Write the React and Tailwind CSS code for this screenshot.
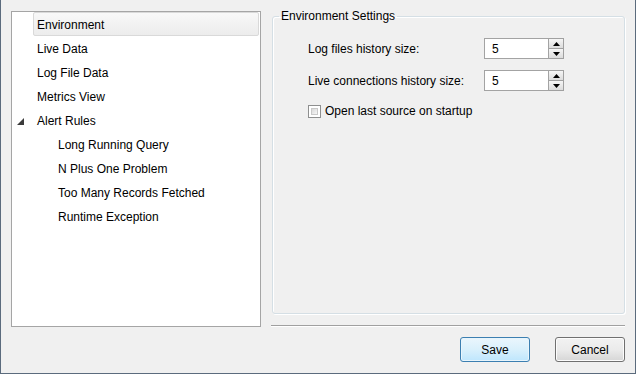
const font = { fontFamily: '"Liberation Sans", Arial, sans-serif' };

const topItems = ['Live Data', 'Log File Data', 'Metrics View'];
const alertRules = ['Long Running Query', 'N Plus One Problem', 'Too Many Records Fetched', 'Runtime Exception'];

const SpinBox = ({ value }) => (
    <div className="flex h-[21px] w-[80px]">
        <div className="flex h-full w-[65px] items-center border border-[#a3a3a3] bg-white pl-[7px] pt-[1px] text-[12px] text-black">{value}</div>
        <div className="flex h-full w-[15px] flex-col">
            <button className="flex h-[11px] w-full items-center justify-center border border-l-0 border-[#a0a0a0] bg-gradient-to-b from-[#f6f6f6] to-[#dcdcdc]">
                <svg width="7" height="4" viewBox="0 0 7 4"><path d="M3.5 0 L7 4 L0 4 Z" fill="#000" /></svg>
            </button>
            <button className="flex h-[10px] w-full items-center justify-center border border-l-0 border-t-0 border-[#a0a0a0] bg-gradient-to-b from-[#f6f6f6] to-[#dcdcdc]">
                <svg width="7" height="4" viewBox="0 0 7 4"><path d="M0 0 L7 0 L3.5 4 Z" fill="#000" /></svg>
            </button>
        </div>
    </div>
);

const App = () => {
    return (
        <div className="flex h-[374px] w-[636px] flex-col border-x border-b border-[#5b6b7d] bg-[#f0f0f0] text-[12px] text-black" style={font}>
            <div className="flex gap-[10px] pl-[10px] pt-[8px]">
                {/* tree */}
                <div className="mt-[3px] h-[316px] w-[250px] border border-[#a5a5a5] bg-white">
                    <div className="ml-[21px] mr-[1px] flex h-[24px] items-center rounded-[2px] border border-[#d9d9d9] bg-gradient-to-b from-[#f8f8f8] to-[#ececec] pl-[3px] pt-[2px]">
                        Environment
                    </div>
                    {topItems.map((t) => (
                        <div key={t} className="flex h-[24px] items-center pl-[25px] pt-[2px]">{t}</div>
                    ))}
                    <div className="flex h-[24px] items-center pt-[2px]">
                        <span className="flex w-[25px] justify-start pl-[5px]">
                            <svg width="7" height="7" viewBox="0 0 7 7"><path d="M7 0 L7 7 L0 7 Z" fill="#3b3b3b" /></svg>
                        </span>
                        Alert Rules
                    </div>
                    {alertRules.map((t) => (
                        <div key={t} className="flex h-[24px] items-center pl-[46px] pt-[2px]">{t}</div>
                    ))}
                </div>

                {/* settings */}
                <div className="flex w-[354px] flex-col">
                    <fieldset className="ml-[1px] h-[306px] rounded-[3px] border border-[#d5dfe5] shadow-[inset_1px_1px_0_#ffffff,1px_1px_0_#ffffff]">
                        <legend className="ml-[6px] px-[2px] leading-[16px]">Environment Settings</legend>
                        <div className="flex flex-col pl-[35px] pt-[14px]">
                            <div className="flex items-center">
                                <span className="w-[176px] pt-[1px]">Log files history size:</span>
                                <SpinBox value="5" />
                            </div>
                            <div className="mt-[11px] flex items-center">
                                <span className="w-[176px] pt-[1px]">Live connections history size:</span>
                                <SpinBox value="5" />
                            </div>
                            <label className="mt-[11px] flex items-center gap-[4px]">
                                <span className="h-[13px] w-[13px] border border-[#8e8f8f] bg-white p-[2px]">
                                    <span className="block h-full w-full border border-[#c9c9c9] bg-gradient-to-br from-[#d9d9d9] to-[#f7f7f7]" />
                                </span>
                                Open last source on startup
                            </label>
                        </div>
                    </fieldset>
                    <div className="mt-[11px] h-[2px] border-t border-b border-t-[#a0a0a0] border-b-white" />
                </div>
            </div>

            <div className="flex justify-end gap-[25px] pr-[10px] pt-[10px]">
                <button className="h-[25px] w-[70px] rounded-[3px] border border-[#3c7fb1] bg-gradient-to-b from-[#eaf6fd] via-[#d9f0fc] to-[#bee6fd] shadow-[inset_0_0_0_1px_#e8f5fc] text-[12px]">Save</button>
                <button className="h-[25px] w-[70px] rounded-[3px] border border-[#707070] bg-gradient-to-b from-[#f2f2f2] via-[#ebebeb] to-[#d6d6d6] shadow-[inset_0_0_0_1px_#fcfcfc] text-[12px]">Cancel</button>
            </div>
        </div>
    );
};

export default App;
